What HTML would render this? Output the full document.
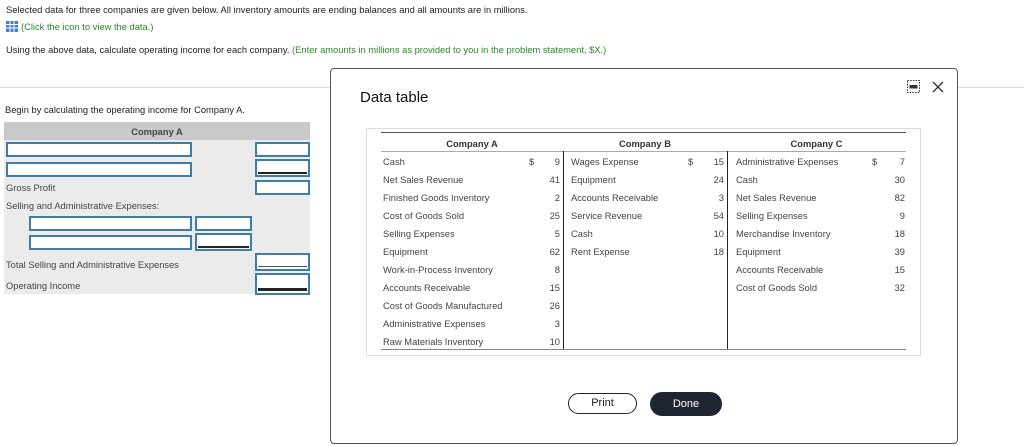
<!DOCTYPE html>
<html><head><meta charset="utf-8"><style>
*{margin:0;padding:0;box-sizing:border-box}
body{width:1024px;height:446px;background:#fff;font-family:"Liberation Sans",Arial,sans-serif;position:relative;overflow:hidden;color:#222}
.a{position:absolute;white-space:nowrap}
.t{font-size:9.35px;line-height:10px}
.g{color:#2a8a2a}
.in{position:absolute;background:#fff;border:2px solid #3d7fa3}
.ul{position:absolute;height:1px;background:#222}
.lbl{font-size:9.35px;line-height:10px;color:#444;position:absolute;white-space:nowrap}
.r{text-align:right}
</style></head><body>
<div class="a t" style="left:6px;top:5px">Selected data for three companies are given below. All inventory amounts are ending balances and all amounts are in millions.</div>
<svg class="a" style="left:6px;top:21px" width="12" height="11"><rect x="0" y="0" width="12" height="11" fill="#3f7fd6"/><g stroke="#fff" stroke-width="1"><line x1="0" y1="3.5" x2="12" y2="3.5"/><line x1="0" y1="7" x2="12" y2="7"/><line x1="4" y1="0" x2="4" y2="11"/><line x1="8" y1="0" x2="8" y2="11"/></g></svg>
<div class="a t g" style="left:21px;top:22px">(Click the icon to view the data.)</div>
<div class="a t" style="left:6px;top:45px">Using the above data, calculate operating income for each company. <span class="g">(Enter amounts in millions as provided to you in the problem statement, $X.)</span></div>
<div class="a" style="left:0;top:87px;width:1024px;height:1px;background:#ddd"></div>
<div class="a t" style="left:5px;top:105px">Begin by calculating the operating income for Company A.</div>

<div class="a" style="left:4px;top:122px;width:306px;height:172px;background:#ebebeb"></div>
<div class="a" style="left:4px;top:122px;width:306px;height:18px;background:#c9c9c9"></div>
<div class="a t" style="left:4px;top:127px;width:306px;text-align:center;font-weight:bold;color:#444">Company A</div>
<div class="in" style="left:6px;top:142px;width:186px;height:15px"></div>
<div class="in" style="left:6px;top:162px;width:186px;height:15px"></div>
<div class="in" style="left:255px;top:142px;width:55px;height:15px"></div>
<div class="in" style="left:255px;top:159px;width:55px;height:18px"></div><div class="ul" style="left:258px;top:172px;width:49px;height:1.5px"></div>
<div class="in" style="left:255px;top:180px;width:55px;height:15px"></div>
<div class="lbl" style="left:6px;top:183px">Gross Profit</div>
<div class="lbl" style="left:6px;top:201px">Selling and Administrative Expenses:</div>
<div class="in" style="left:29px;top:216px;width:163px;height:15px"></div>
<div class="in" style="left:29px;top:235px;width:163px;height:15px"></div>
<div class="in" style="left:195px;top:216px;width:57px;height:15px"></div>
<div class="in" style="left:195px;top:233px;width:57px;height:18px"></div><div class="ul" style="left:198px;top:246px;width:51px;height:1.5px"></div>
<div class="lbl" style="left:6px;top:260px">Total Selling and Administrative Expenses</div>
<div class="in" style="left:255px;top:253px;width:55px;height:18px"></div><div class="ul" style="left:258px;top:266px;width:49px;height:1px;background:#555"></div>
<div class="lbl" style="left:6px;top:281px">Operating Income</div>
<div class="in" style="left:255px;top:273px;width:55px;height:22px"></div><div class="ul" style="left:258px;top:288px;width:49px;height:3px"></div>

<div class="a" style="left:330px;top:68px;width:628px;height:376px;border:1.5px solid #555;border-radius:4px;background:#fff"></div>
<div class="a" style="left:360px;top:89px;font-size:15px;color:#111">Data table</div>
<svg class="a" style="left:907px;top:79px" width="40" height="16"><rect x="0.5" y="1.5" width="12" height="12" fill="none" stroke="#333" stroke-dasharray="1.5 1.2"/><rect x="2.5" y="6" width="8" height="3.5" fill="#333"/><path d="M26 3 L36 13 M36 3 L26 13" stroke="#333" stroke-width="1.3"/></svg>
<div class="a" style="left:366px;top:128px;width:555px;height:228px;border:1px solid #ddd"></div>
<div class="a" style="left:381px;top:132px;width:525px;height:1px;background:#555"></div>
<div class="a" style="left:381px;top:151px;width:525px;height:1px;background:#aaa"></div>
<div class="a" style="left:381px;top:349px;width:525px;height:1px;background:#888"></div>
<div class="a" style="left:563px;top:151px;width:1px;height:198px;background:#222"></div>
<div class="a" style="left:727px;top:151px;width:1px;height:198px;background:#222"></div>
<div class="a t" style="left:381px;top:139px;width:182px;text-align:center;font-weight:bold;color:#333">Company A</div>
<div class="a t" style="left:563px;top:139px;width:164px;text-align:center;font-weight:bold;color:#333">Company B</div>
<div class="a t" style="left:727px;top:139px;width:179px;text-align:center;font-weight:bold;color:#333">Company C</div>
<div id="rows"></div>
<script>
var A=[["Cash","9"],["Net Sales Revenue","41"],["Finished Goods Inventory","2"],["Cost of Goods Sold","25"],["Selling Expenses","5"],["Equipment","62"],["Work-in-Process Inventory","8"],["Accounts Receivable","15"],["Cost of Goods Manufactured","26"],["Administrative Expenses","3"],["Raw Materials Inventory","10"]];
var B=[["Wages Expense","15"],["Equipment","24"],["Accounts Receivable","3"],["Service Revenue","54"],["Cash","10"],["Rent Expense","18"]];
var C=[["Administrative Expenses","7"],["Cash","30"],["Net Sales Revenue","82"],["Selling Expenses","9"],["Merchandise Inventory","18"],["Equipment","39"],["Accounts Receivable","15"],["Cost of Goods Sold","32"]];
var h="";
function col(d,lx,dx,rx){d.forEach(function(r,i){var y=157+i*18;h+='<div class="a t" style="left:'+lx+'px;top:'+y+'px;color:#444">'+r[0]+'</div>';h+='<div class="a t r" style="left:'+(rx-30)+'px;width:30px;top:'+y+'px;color:#444">'+r[1]+'</div>';if(i==0)h+='<div class="a t" style="left:'+dx+'px;top:'+y+'px;color:#444">$</div>';});}
col(A,383,529,560);col(B,571,688,724);col(C,736,872,905);
document.getElementById("rows").innerHTML=h;
</script>
<div class="a" style="left:568px;top:393px;width:69px;height:21px;border:1.2px solid #222;border-radius:11px;font-size:11px;line-height:19px;text-align:center">Print</div>
<div class="a" style="left:650px;top:392px;width:72px;height:24px;background:#1f2533;border-radius:12px;color:#fff;font-size:11px;line-height:24px;text-align:center">Done</div>
</body></html>
